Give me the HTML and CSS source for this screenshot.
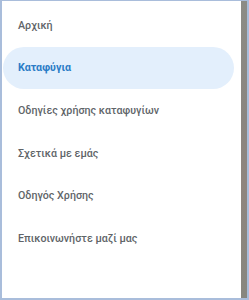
FILE: index.html
```html
<!DOCTYPE html>
<html lang="el">
<head>
<meta charset="utf-8">
<link rel="stylesheet" href="styles.css">
</head>
<body>
<div class="frame">
  <nav class="drawer">
    <div class="item">Αρχική</div>
    <div class="item active">Καταφύγια</div>
    <div class="item">Οδηγίες χρήσης καταφυγίων</div>
    <div class="item">Σχετικά με εμάς</div>
    <div class="item">Οδηγός Χρήσης</div>
    <div class="item">Επικοινωνήστε μαζί μας</div>
  </nav>
  <div class="scrim"></div>
</div>
</body>
</html>
```
FILE: styles.css
```css
html, body {
  margin: 0;
  padding: 0;
  width: 249px;
  height: 300px;
  overflow: hidden;
}
body {
  background: #a9bddb;
  font-family: Roboto, "Noto Sans", sans-serif;
}
.frame {
  display: flex;
  height: 297px;
  margin: 1px 2px 2px 2px;
}
.drawer {
  width: 239px;
  background: #ffffff;
  display: flex;
  flex-direction: column;
  padding-top: 3px;
}
.item {
  height: 42.6px;
  display: flex;
  align-items: center;
  padding-left: 15px;
  margin-right: 7px;
  margin-left: 1px;
  font-size: 10.7px;
  font-weight: 500;
  color: #606468;
  border-radius: 22px;
}
.item.active {
  background: #e3effc;
  color: #2b7cc6;
  font-weight: 700;
}
.scrim {
  flex: 1;
  background: linear-gradient(180deg, #8c8c86 0%, #8a8580 40%, #8f857e 60%, #87877f 100%);
}
```
